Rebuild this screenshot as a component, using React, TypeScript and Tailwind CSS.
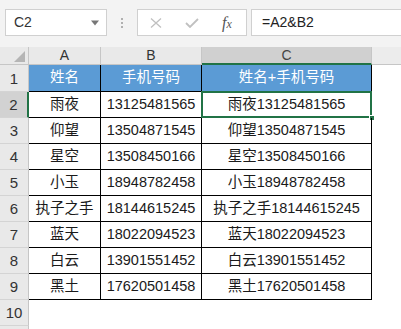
import React from 'react';

const rows = [
  ['雨夜', '13125481565'],
  ['仰望', '13504871545'],
  ['星空', '13508450166'],
  ['小玉', '18948782458'],
  ['执子之手', '18144615245'],
  ['蓝天', '18022094523'],
  ['白云', '13901551452'],
  ['黑土', '17620501458'],
];

const font = { fontFamily: '"Liberation Sans", "Noto Sans CJK SC", sans-serif' };

function RowHead({ n, active }: { n?: number; active?: boolean }) {
  return (
    <div
      className={`w-[29px] shrink-0 flex items-end justify-center pb-[1px] border-b border-[#d4d4d4] text-[15px] text-[#333] ${
        active ? 'bg-[#d2d2d2] border-r-2 border-r-[#217346]' : 'bg-[#e9e9e9] border-r border-r-[#c6c6c6]'
      }`}
    >
      {n}
    </div>
  );
}

export default function App() {
  return (
    <div className="w-[401px] h-[329px] overflow-hidden bg-white" style={font}>
      {/* formula bar */}
      <div className="h-[47px] bg-[#f3f3f3] flex items-start pt-[9px] pl-[5px]">
        <div className="w-[102px] h-[27px] bg-white border border-[#d0d0d0] flex items-center justify-between pl-[8px] pr-[6px] text-[14px] text-[#333]">
          <span>C2</span>
          <svg width="10" height="6" viewBox="0 0 10 6">
            <path d="M1 0.5 L9 0.5 L5 5.5 Z" fill="#777" />
          </svg>
        </div>
        <div className="w-[30px] h-[27px] flex flex-col items-center justify-center gap-[2px]">
          <span className="w-[2px] h-[2px] bg-[#b0b0b0]" />
          <span className="w-[2px] h-[2px] bg-[#b0b0b0]" />
          <span className="w-[2px] h-[2px] bg-[#b0b0b0]" />
        </div>
        <div className="w-[110px] h-[27px] bg-white border border-[#d0d0d0] flex items-center">
          <svg width="12" height="10" viewBox="0 0 12 10" className="ml-[12px]">
            <path d="M1 0.5 L11 9.5 M11 0.5 L1 9.5" stroke="#c0c0c0" strokeWidth="1.3" fill="none" />
          </svg>
          <svg width="14" height="10" viewBox="0 0 14 10" className="ml-[23px]">
            <path d="M1 5 L5 9 L13 1" stroke="#c0c0c0" strokeWidth="1.8" fill="none" />
          </svg>
          <span
            className="ml-[23px] text-[16px] italic text-[#555]"
            style={{ fontFamily: '"Liberation Serif", serif' }}
          >
            f<span className="text-[12px]">x</span>
          </span>
        </div>
        <div className="ml-[4px] flex-1 h-[27px] bg-white border border-[#d0d0d0] border-r-0 flex items-center pl-[10px] text-[14px] text-[#222]">
          =A2&amp;B2
        </div>
      </div>

      {/* column headers */}
      <div className="h-[18px] flex bg-[#e9e9e9] text-[14px] text-[#333]">
        <div className="w-[29px] shrink-0 relative border-r border-b border-[#c6c6c6]">
          <svg width="11" height="11" viewBox="0 0 11 11" className="absolute right-[3px] bottom-[2px]">
            <path d="M11 0 L11 11 L0 11 Z" fill="#b5b5b5" />
          </svg>
        </div>
        <div className="w-[72px] shrink-0 flex items-end justify-center border-r border-b border-[#c6c6c6] leading-[17px]">
          A
        </div>
        <div className="w-[101px] shrink-0 flex items-end justify-center border-r border-b border-[#c6c6c6] leading-[17px]">
          B
        </div>
        <div className="w-[170px] shrink-0 flex items-end justify-center bg-[#d0d0d0] border-r border-r-[#c6c6c6] border-b-2 border-b-[#217346] leading-[16px] text-[#444]">
          C
        </div>
        <div className="flex-1 border-b border-[#c6c6c6] bg-[#ececec]" />
      </div>

      {/* header row */}
      <div className="h-[27px] flex text-[14.5px]">
        <RowHead n={1} />
        <div className="w-[72px] shrink-0 bg-[#5b9bd5] text-white flex items-center justify-center border-r border-b border-black">
          姓名
        </div>
        <div className="w-[101px] shrink-0 bg-[#5b9bd5] text-white flex items-center justify-center border-r border-b border-black">
          手机号码
        </div>
        <div className="w-[170px] shrink-0 bg-[#5b9bd5] text-white flex items-center justify-center border-r border-b border-black">
          姓名+手机号码
        </div>
        <div className="flex-1" />
      </div>

      {rows.map(([name, phone], i) => (
        <div key={phone} className="h-[26px] flex text-[14.5px] text-[#1a1a1a]">
          <RowHead n={i + 2} active={i === 0} />
          <div className="w-[72px] shrink-0 flex items-center justify-center border-r border-b border-black">
            {name}
          </div>
          <div className="w-[101px] shrink-0 flex items-center justify-center border-r border-b border-black">
            {phone}
          </div>
          <div className="w-[170px] shrink-0 relative flex items-center justify-center border-r border-b border-black">
            {name}
            {phone}
            {i === 0 && (
              <>
                <div className="absolute -left-[1px] -top-[1px] -right-[1px] -bottom-[1px] border-2 border-[#217346]" />
                <div className="absolute -right-[4px] -bottom-[4px] w-[6px] h-[6px] bg-[#217346] border border-white" />
              </>
            )}
          </div>
          <div className="flex-1" />
        </div>
      ))}

      <div className="h-[26px] flex text-[14.5px]">
        <RowHead n={10} />
        <div className="flex-1" />
      </div>
      <div className="h-[26px] flex text-[14.5px]">
        <RowHead />
        <div className="flex-1" />
      </div>
    </div>
  );
}
